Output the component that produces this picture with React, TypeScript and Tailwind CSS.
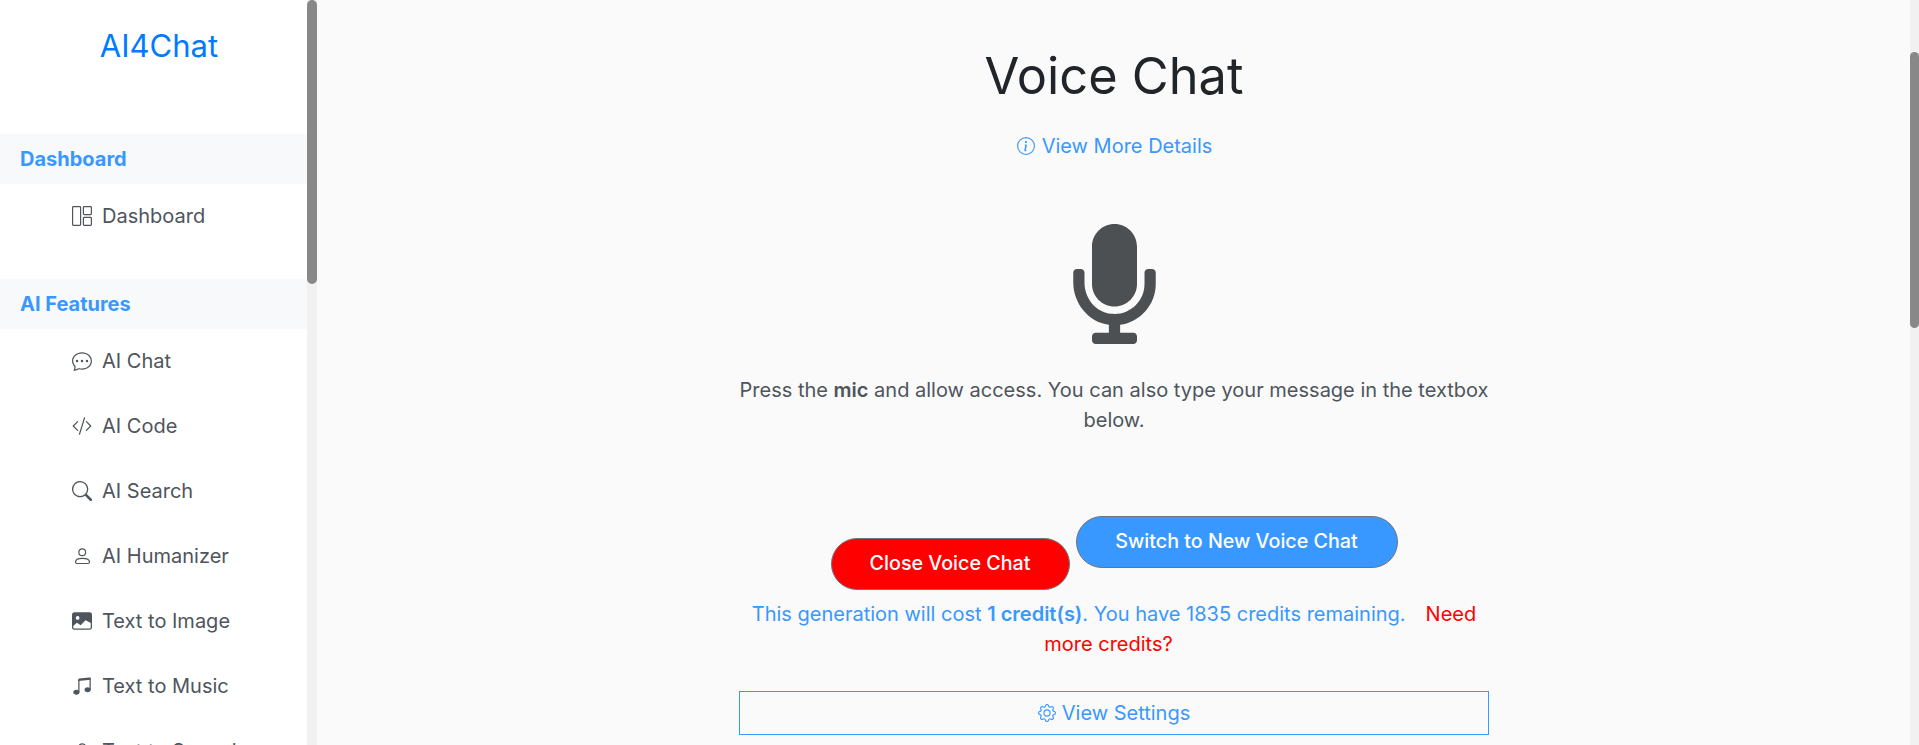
import { FaMicrophone } from 'react-icons/fa';
import {
  BsChatDots,
  BsCodeSlash,
  BsGear,
  BsImageFill,
  BsInfoCircle,
  BsMusicNoteBeamed,
  BsSearch,
} from 'react-icons/bs';

type IconProps = { className?: string };

function PanelsIcon({ className }: IconProps) {
  return (
    <svg viewBox="0 0 20 20" fill="none" stroke="currentColor" strokeWidth="1.2" className={className}>
      <rect x="0.6" y="0.6" width="8" height="18.8" rx="0.8" />
      <rect x="11.4" y="0.6" width="8" height="8" rx="0.8" />
      <rect x="11.4" y="11.4" width="8" height="8" rx="0.8" />
    </svg>
  );
}

function UserIcon({ className }: IconProps) {
  return (
    <svg viewBox="0 0 20 20" fill="none" stroke="currentColor" strokeWidth="1.2" className={className}>
      <circle cx="10.2" cy="6.2" r="3.4" />
      <path d="M3.5 16C3.5 13.6 6.5 12.3 10.3 12.3C14 12.3 17.5 13.6 17.5 16C17.5 17 17 17.5 16 17.5H5C4 17.5 3.5 17 3.5 16Z" />
    </svg>
  );
}

const features = [
  { label: 'AI Chat', icon: BsChatDots },
  { label: 'AI Code', icon: BsCodeSlash },
  { label: 'AI Search', icon: BsSearch },
  { label: 'AI Humanizer', icon: UserIcon },
  { label: 'Text to Image', icon: BsImageFill },
  { label: 'Text to Music', icon: BsMusicNoteBeamed },
  { label: 'Text to Speech', icon: UserIcon },
];

function SectionHeader({ title }: { title: string }) {
  return (
    <div className="flex h-[50px] items-center bg-[#f8f9fa] pl-5 text-[20px] leading-none font-bold text-[#3898ff]">
      {title}
    </div>
  );
}

function NavItem({ label, icon: Icon }: { label: string; icon: (props: IconProps) => React.ReactNode }) {
  return (
    <div className="flex h-[65px] shrink-0 items-center gap-[10px] pb-[2px] pl-[72px] text-[20px] text-[#4e555c]">
      <Icon className="h-5 w-5 shrink-0" />
      <span>{label}</span>
    </div>
  );
}

export default function App() {
  return (
    <div className="flex h-[745px] w-full overflow-hidden bg-[#fafafa] font-['Inter',sans-serif]">
      {/* Sidebar */}
      <aside className="flex h-full w-[317px] shrink-0 overflow-hidden">
        <div className="w-[307px] shrink-0 bg-white">
          <div className="h-[134px] pt-[25px] pl-[11px] text-center text-[31px] leading-[42px] text-[#007bff]">
            AI4Chat
          </div>
          <SectionHeader title="Dashboard" />
          <div className="flex h-[95px] flex-col">
            <NavItem label="Dashboard" icon={PanelsIcon} />
          </div>
          <SectionHeader title="AI Features" />
          <div className="flex flex-col">
            {features.map((item) => (
              <NavItem key={item.label} label={item.label} icon={item.icon} />
            ))}
          </div>
        </div>
        <div className="h-full w-[10px] bg-[#f1f1f1]">
          <div className="h-[284px] w-full rounded-[5px] bg-[#888888]" />
        </div>
      </aside>

      {/* Main */}
      <main className="flex min-w-0 flex-1 flex-col items-center overflow-hidden">
        <div className="ml-[1px] flex w-[750px] flex-col items-center">
          <h1 className="mt-[42px] text-[50.5px] leading-[68px] font-normal text-[#212529]">Voice Chat</h1>
          <a className="mt-[21px] ml-[1px] flex items-center gap-[7px] text-[20px] leading-[30px] text-[#3898ff]">
            <BsInfoCircle className="h-[18px] w-[18px]" />
            View More Details
          </a>
          <FaMicrophone className="mt-[63px] h-[120px] w-[83px] text-[#4d5053]" />
          <p className="mt-[31px] text-center text-[20px] leading-[30px] text-[#4e555c]">
            Press the <b className="font-semibold">mic</b> and allow access. You can also type your message in the
            textbox below.
          </p>
          <div className="mt-[81px] flex items-start gap-[6px]">
            <button className="mt-[22px] h-[52px] w-[239px] rounded-[26px] border border-[#6c757d] bg-[#ff0000] text-[19.7px] font-medium text-white">
              Close Voice Chat
            </button>
            <button className="h-[52px] w-[322px] rounded-[26px] border border-[#6c757d] bg-[#3898ff] text-[19.7px] font-medium text-white">
              Switch to New Voice Chat
            </button>
          </div>
          <p className="mt-[9px] text-center text-[20px] leading-[30px] text-[#3898ff]">
            This generation will cost <b className="font-semibold">1 credit(s)</b>. You have 1835 credits remaining.
            <span className="mr-[11px] ml-5 text-[#ff0000]">Need more credits?</span>
          </p>
          <div className="mt-[32px] flex h-[44px] w-full items-center justify-center gap-[6px] border border-[#3898ff] text-[20px] text-[#3898ff]">
            <BsGear className="h-[18px] w-[18px]" />
            View Settings
          </div>
        </div>
      </main>

      {/* Page scrollbar */}
      <div className="h-full w-[9px] shrink-0 bg-[#f1f1f1]">
        <div className="mt-[52px] h-[276px] w-full rounded-[5px] bg-[#888888]" />
      </div>
    </div>
  );
}
